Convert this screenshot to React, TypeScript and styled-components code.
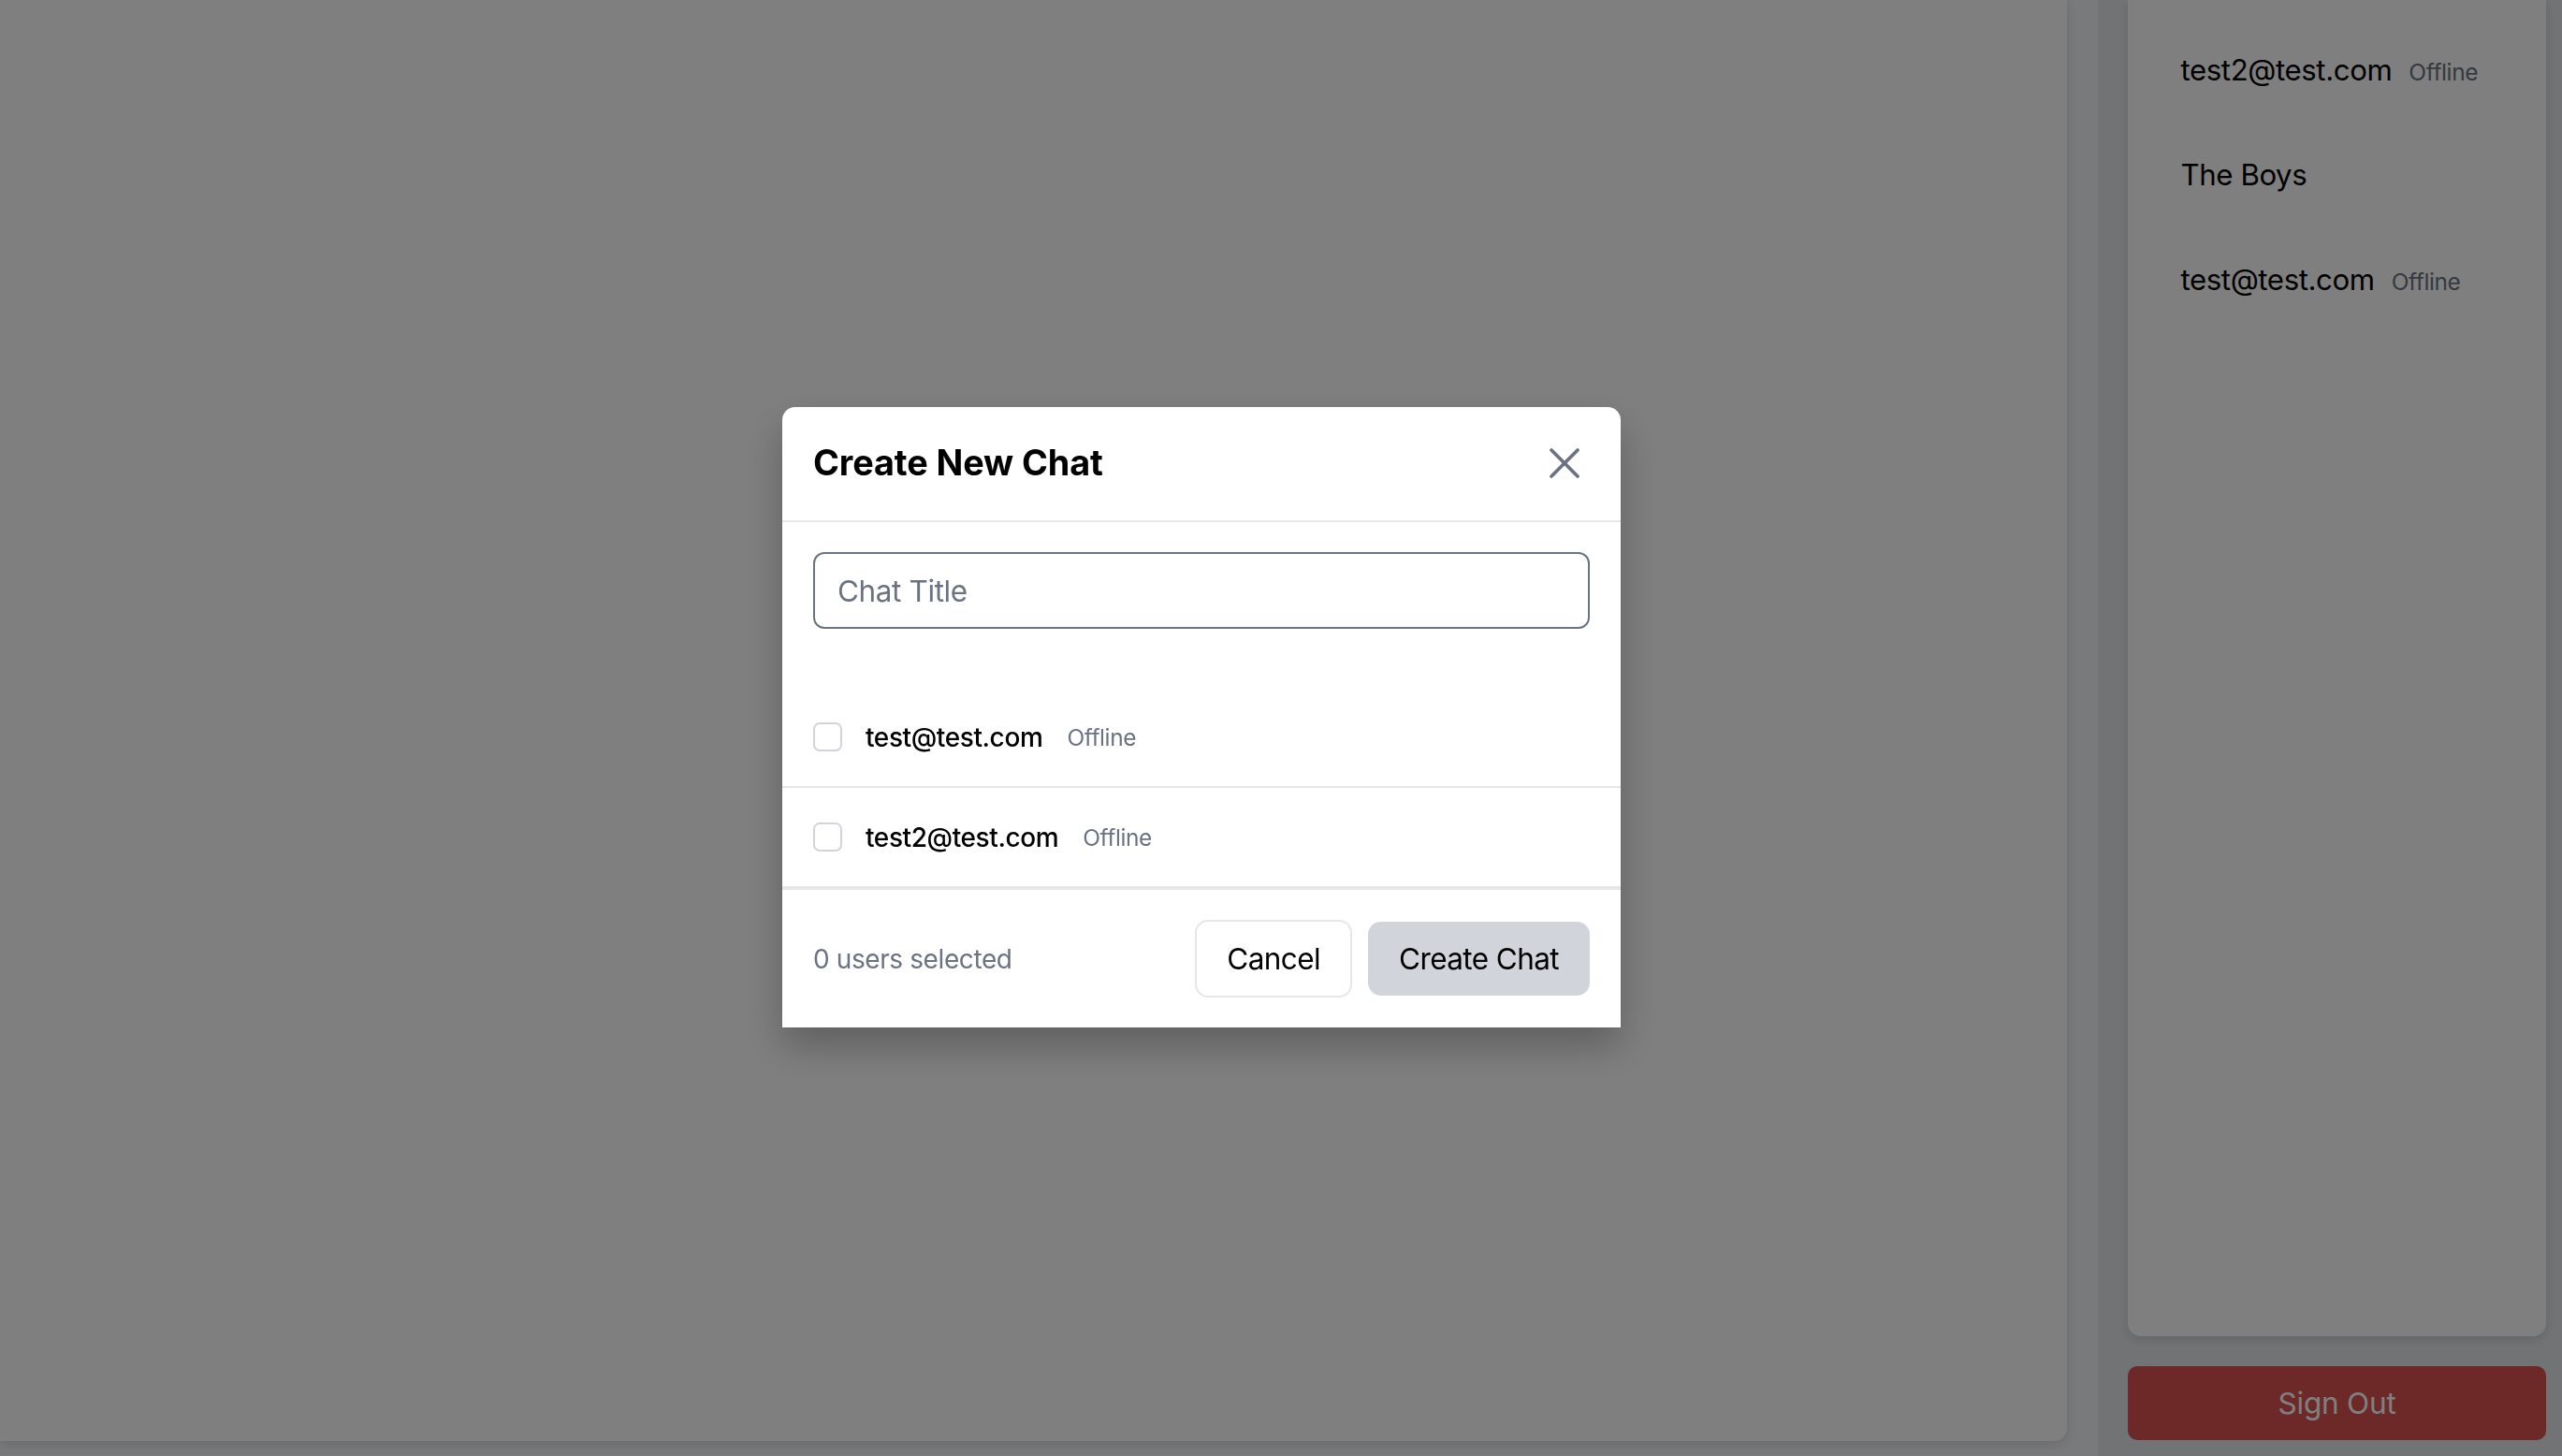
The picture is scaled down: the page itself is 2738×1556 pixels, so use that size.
import React from "react";
import styled, { createGlobalStyle } from "styled-components";

const GlobalStyle = createGlobalStyle`
  html, body {
    margin: 0;
    padding: 0;
    height: 100%;
    overflow: hidden;
  }
  body {
    font-family: Inter, "Noto Sans", "Liberation Sans", sans-serif;
    color: #000;
    background: #f3f4f6;
    letter-spacing: -0.4px;
  }
  * { box-sizing: border-box; }
`;

const Page = styled.div`
  display: flex;
  width: 100vw;
  height: 100vh;
  background: #f3f4f6;
`;

const Main = styled.main`
  flex: 1;
  background: #ffffff;
  border-bottom-right-radius: 14px;
  margin-bottom: 16px;
  margin-right: 33px;
  box-shadow: 0 4px 12px rgba(0, 0, 0, 0.12);
`;

const SidebarColumn = styled.aside`
  width: 496px;
  background: #e5e7eb;
  display: flex;
  flex-direction: column;
  gap: 32px;
  padding: 0 17px 17px 32px;
`;

const ChatCard = styled.div`
  flex: 1;
  background: #ffffff;
  border-bottom-left-radius: 14px;
  border-bottom-right-radius: 14px;
  box-shadow: 0 4px 12px rgba(0, 0, 0, 0.12);
  padding: 19px 28px 0;
  display: flex;
  flex-direction: column;
`;

const ChatItem = styled.div`
  display: flex;
  align-items: baseline;
  padding: 31.5px 28.5px;
  font-size: 31.2px;
  line-height: 49px;
  height: 112px;
  color: #000;
`;

const SideStatus = styled.span`
  margin-left: 18px;
  font-size: 24.5px;
  line-height: 1;
  color: #6b7280;
`;

const SignOut = styled.button`
  height: 79px;
  border: none;
  border-radius: 10px;
  background: #da5050;
  color: #ffffff;
  font-family: inherit;
  font-size: 31.5px;
  letter-spacing: -0.2px;
  cursor: pointer;
`;

const Overlay = styled.div`
  position: fixed;
  inset: 0;
  background: rgba(0, 0, 0, 0.5);
  display: flex;
  align-items: flex-start;
  justify-content: flex-start;
  padding: 435px 0 0 836px;
`;

const Modal = styled.div`
  width: 896px;
  background: #ffffff;
  border-radius: 14px 14px 0 0;
  box-shadow: 0 20px 40px rgba(0, 0, 0, 0.25);
  display: flex;
  flex-direction: column;
`;

const Header = styled.div`
  height: 123px;
  padding: 0 33px 2px;
  display: flex;
  align-items: center;
  justify-content: space-between;
  border-bottom: 2px solid #e5e7eb;
`;

const Title = styled.h2`
  margin: 0;
  font-size: 37.8px;
  font-weight: 700;
  line-height: 49px;
  letter-spacing: -0.1px;
`;

const CloseButton = styled.button`
  width: 42px;
  height: 42px;
  padding: 0;
  border: none;
  background: transparent;
  display: flex;
  align-items: center;
  justify-content: center;
  color: #6b7280;
  cursor: pointer;
  margin-right: 6px;
`;

const InputWrap = styled.div`
  padding: 32px 33px 0;
`;

const TitleInput = styled.input`
  width: 100%;
  height: 82px;
  border: 2px solid #6b7280;
  border-radius: 12px;
  padding: 0 24px;
  font-family: inherit;
  font-size: 31.5px;
  letter-spacing: -0.4px;
  color: #000;
  outline: none;
  &::placeholder {
    color: #6b7280;
  }
`;

const UserList = styled.div`
  margin-top: 63px;
  display: flex;
  flex-direction: column;
`;

const UserRow = styled.label`
  height: 107px;
  padding: 0 33px;
  display: flex;
  align-items: center;
  border-bottom: 2px solid #e5e7eb;
  cursor: pointer;
`;

const Check = styled.span`
  width: 31px;
  height: 31px;
  border: 2px solid #d1d5db;
  border-radius: 7px;
  background: #fff;
  flex-shrink: 0;
  margin-right: 25px;
`;

const UserName = styled.span`
  font-size: 28px;
  font-weight: 500;
`;

const UserStatus = styled.span`
  margin-left: 26px;
  font-size: 24.5px;
  color: #6b7280;
`;

const Footer = styled.div`
  height: 149px;
  padding: 0 33px;
  border-top: 2px solid #e5e7eb;
  display: flex;
  align-items: center;
  justify-content: space-between;
`;

const Selected = styled.span`
  font-size: 28px;
  color: #6b7280;
`;

const Actions = styled.div`
  display: flex;
  align-items: center;
  gap: 17px;
`;

const Button = styled.button<{ $variant: "outline" | "muted" }>`
  height: ${(p) => (p.$variant === "outline" ? "83px" : "79px")};
  padding: 0 ${(p) => (p.$variant === "outline" ? "32px" : "33px")};
  border-radius: 14px;
  font-family: inherit;
  font-size: 31.5px;
  letter-spacing: -0.6px;
  color: #000;
  cursor: pointer;
  border: ${(p) => (p.$variant === "outline" ? "2px solid #e5e7eb" : "none")};
  background: ${(p) => (p.$variant === "outline" ? "#ffffff" : "#d1d5db")};
`;

const chats = [
  { name: "test2@test.com", status: "Offline" },
  { name: "The Boys" },
  { name: "test@test.com", status: "Offline" },
];

const users = [
  { email: "test@test.com", status: "Offline" },
  { email: "test2@test.com", status: "Offline" },
];

export default function App() {
  return (
    <>
      <GlobalStyle />
      <Page>
        <Main />
        <SidebarColumn>
          <ChatCard>
            {chats.map((c) => (
              <ChatItem key={c.name}>
                {c.name}
                {c.status && <SideStatus>{c.status}</SideStatus>}
              </ChatItem>
            ))}
          </ChatCard>
          <SignOut>Sign Out</SignOut>
        </SidebarColumn>
      </Page>
      <Overlay>
        <Modal>
          <Header>
            <Title>Create New Chat</Title>
            <CloseButton aria-label="Close">
              <svg width="42" height="42" viewBox="0 0 24 24" fill="none" stroke="currentColor" strokeWidth="2.1" strokeLinecap="round">
                <line x1="4" y1="4" x2="20" y2="20" />
                <line x1="20" y1="4" x2="4" y2="20" />
              </svg>
            </CloseButton>
          </Header>
          <InputWrap>
            <TitleInput placeholder="Chat Title" />
          </InputWrap>
          <UserList>
            {users.map((u) => (
              <UserRow key={u.email}>
                <Check />
                <UserName>{u.email}</UserName>
                <UserStatus>{u.status}</UserStatus>
              </UserRow>
            ))}
          </UserList>
          <Footer>
            <Selected>0 users selected</Selected>
            <Actions>
              <Button $variant="outline">Cancel</Button>
              <Button $variant="muted">Create Chat</Button>
            </Actions>
          </Footer>
        </Modal>
      </Overlay>
    </>
  );
}
